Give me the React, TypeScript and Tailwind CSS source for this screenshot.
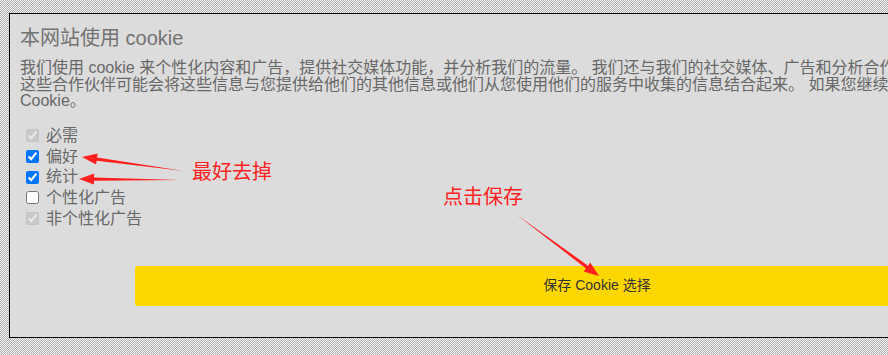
import React from 'react';

type Pt = [number, number];

// tapered red arrow from tail to tip, built as one polygon
function arrowPoints(tail: Pt, tip: Pt, shaft = 3.4, headLen = 15, headW = 11): string {
  const dx = tip[0] - tail[0];
  const dy = tip[1] - tail[1];
  const len = Math.hypot(dx, dy);
  const ux = dx / len;
  const uy = dy / len;
  const nx = -uy;
  const ny = ux;
  const bx = tip[0] - ux * headLen;
  const by = tip[1] - uy * headLen;
  const p = (x: number, y: number) => `${x.toFixed(1)},${y.toFixed(1)}`;
  return [
    p(tail[0], tail[1]),
    p(bx + (nx * shaft) / 2, by + (ny * shaft) / 2),
    p(bx + (nx * headW) / 2, by + (ny * headW) / 2),
    p(tip[0], tip[1]),
    p(bx - (nx * headW) / 2, by - (ny * headW) / 2),
    p(bx - (nx * shaft) / 2, by - (ny * shaft) / 2),
  ].join(' ');
}

const OPTIONS = [
  { label: '必需', checked: true, disabled: true },
  { label: '偏好', checked: true, disabled: false },
  { label: '统计', checked: true, disabled: false },
  { label: '个性化广告', checked: false, disabled: false },
  { label: '非个性化广告', checked: true, disabled: true },
];

export default function App() {
  return (
    <div className="relative h-[355px] w-[888px] overflow-hidden bg-[conic-gradient(#b0b0b0_25%,#f4f4f4_0_50%,#b0b0b0_0_75%,#f4f4f4_0)] bg-[length:2px_2px] pl-[9px] pt-[13px] font-['Liberation_Sans','Noto_Sans_CJK_SC',sans-serif]">
      <div className="h-[325px] w-[1120px] border border-black bg-[#dcdcdc] px-[10px] pt-[12px]">
        <h2 className="text-[20px] leading-[24px] text-[#737373]">本网站使用 cookie</h2>

        <div className="mt-[10px] text-[16px] leading-[16.5px] text-[#686868]">
          <p className="whitespace-nowrap">
            我们使用 cookie 来个性化内容和广告，提供社交媒体功能，并分析我们的流量。 我们还与我们的社交媒体、广告和分析合作伙伴分享有关您使用我们网站的信息，
          </p>
          <p className="whitespace-nowrap">
            这些合作伙伴可能会将这些信息与您提供给他们的其他信息或他们从您使用他们的服务中收集的信息结合起来。 如果您继续使用我们的网站，即表示您同意我们的
          </p>
          <p className="whitespace-nowrap">Cookie。</p>
        </div>

        <div className="mt-[16px] flex flex-col">
          {OPTIONS.map((opt) => (
            <label
              key={opt.label}
              className="flex h-[20.7px] items-center pl-[6px] text-[16px] text-[#686868]"
            >
              <input
                type="checkbox"
                defaultChecked={opt.checked}
                disabled={opt.disabled}
                className="m-0 h-[13px] w-[13px]"
              />
              <span className="ml-[7px]">{opt.label}</span>
            </label>
          ))}
        </div>

        <button
          type="button"
          className="ml-[115px] mt-[37px] flex h-[40px] w-[924px] items-center justify-center rounded-[3px] bg-[#ffd700] text-[14px] text-[#333333]"
        >
          保存 Cookie 选择
        </button>
      </div>

      {/* annotations drawn over the screenshot */}
      <div className="absolute left-[192px] top-[159px] text-[20px] leading-[26px] text-[#ff2222]">
        最好去掉
      </div>
      <div className="absolute left-[443px] top-[184px] text-[20px] leading-[26px] text-[#ff2222]">
        点击保存
      </div>
      <svg className="absolute left-0 top-0" width="888" height="355" viewBox="0 0 888 355">
        <polygon points={arrowPoints([184, 171], [82, 157])} fill="#ff1f1f" />
        <polygon points={arrowPoints([180, 180], [79, 179])} fill="#ff1f1f" />
        <polygon points={arrowPoints([517, 215], [599, 276])} fill="#ff1f1f" />
      </svg>
    </div>
  );
}
